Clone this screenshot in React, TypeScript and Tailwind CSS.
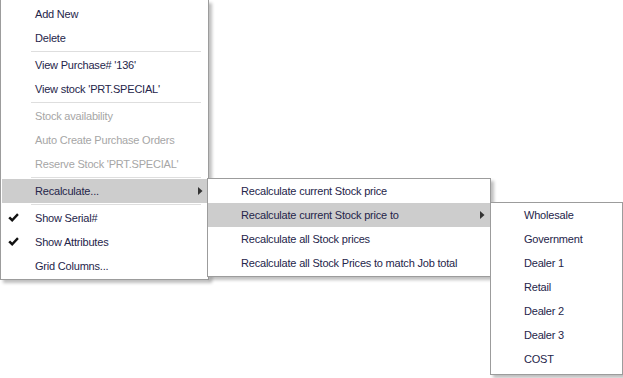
import React from "react";

const font = { fontFamily: '"Liberation Sans", Arial, sans-serif' };

function Check() {
  return (
    <svg width="11" height="10" viewBox="0 0 11 10" className="absolute left-[6px] top-[7px]">
      <path d="M0.3 5.3 L2.1 3.5 L4.2 5.6 L9.1 0.3 L10.8 2 L4.2 9 Z" fill="#111" />
    </svg>
  );
}

function Arrow({ left }: { left: string }) {
  return (
    <svg width="5" height="8" viewBox="0 0 5 8" className={`absolute top-[8px] ${left}`}>
      <path d="M0 0 L4.5 4 L0 8 Z" fill="#333" />
    </svg>
  );
}

type Item = {
  label: string;
  disabled?: boolean;
  checked?: boolean;
  active?: boolean;
  sub?: boolean;
};

function Row({ item, pad, arrowLeft }: { item: Item; pad: string; arrowLeft: string }) {
  return (
    <div
      className={`relative h-[24px] flex items-center ${pad} ${item.active ? "bg-[#cdcdcd]" : ""} ${
        item.disabled ? "text-[#a6a6a6]" : "text-[#25254a]"
      }`}
    >
      {item.checked && <Check />}
      <span className="whitespace-nowrap">{item.label}</span>
      {item.sub && <Arrow left={arrowLeft} />}
    </div>
  );
}

function Sep() {
  return (
    <div className="h-[3px] flex items-center pl-[29px] pr-[7px]">
      <div className="h-px w-full bg-[#dedede]" />
    </div>
  );
}

export default function App() {
  const g1: Item[] = [{ label: "Add New" }, { label: "Delete" }];
  const g2: Item[] = [{ label: "View Purchase# '136'" }, { label: "View stock 'PRT.SPECIAL'" }];
  const g3: Item[] = [
    { label: "Stock availability", disabled: true },
    { label: "Auto Create Purchase Orders", disabled: true },
    { label: "Reserve Stock 'PRT.SPECIAL'", disabled: true },
  ];
  const g4: Item[] = [{ label: "Recalculate...", active: true, sub: true }];
  const g5: Item[] = [
    { label: "Show Serial#", checked: true },
    { label: "Show Attributes", checked: true },
    { label: "Grid Columns..." },
  ];
  const s1: Item[] = [
    { label: "Recalculate current Stock price" },
    { label: "Recalculate current Stock price to", active: true, sub: true },
    { label: "Recalculate all Stock prices" },
    { label: "Recalculate all Stock Prices to match Job total" },
  ];
  const s2: Item[] = ["Wholesale", "Government", "Dealer 1", "Retail", "Dealer 2", "Dealer 3", "COST"].map(
    (l) => ({ label: l })
  );

  const mainRows = (items: Item[]) =>
    items.map((it) => <Row key={it.label} item={it} pad="pl-[33px]" arrowLeft="left-[196px]" />);

  return (
    <div
      className="relative w-[623px] h-[378px] bg-white overflow-hidden text-[11px] tracking-[-0.2px]"
      style={font}
    >
      {/* main menu */}
      <div className="absolute left-0 top-0 w-[209px] flex flex-col border-x border-b border-[#9c9c9c] bg-white pt-[2px] pb-px pl-px shadow-[3px_3px_3px_rgba(0,0,0,0.25)]">
        {mainRows(g1)}
        <Sep />
        {mainRows(g2)}
        <Sep />
        {mainRows(g3)}
        <Sep />
        {mainRows(g4)}
        <Sep />
        {mainRows(g5)}
      </div>

      {/* submenu 1 */}
      <div className="absolute left-[207px] top-[178px] w-[284px] flex flex-col border border-[#9c9c9c] bg-white pb-[1px] shadow-[3px_3px_3px_rgba(0,0,0,0.25)]">
        {s1.map((it) => (
          <Row key={it.label} item={it} pad="pl-[33px]" arrowLeft="left-[272px]" />
        ))}
      </div>

      {/* submenu 2 */}
      <div className="absolute left-[490px] top-[202px] w-[133px] flex flex-col border border-[#9c9c9c] bg-white pb-[3px] shadow-[3px_3px_3px_rgba(0,0,0,0.25)]">
        {s2.map((it) => (
          <Row key={it.label} item={it} pad="pl-[33px]" arrowLeft="left-[120px]" />
        ))}
      </div>
    </div>
  );
}
